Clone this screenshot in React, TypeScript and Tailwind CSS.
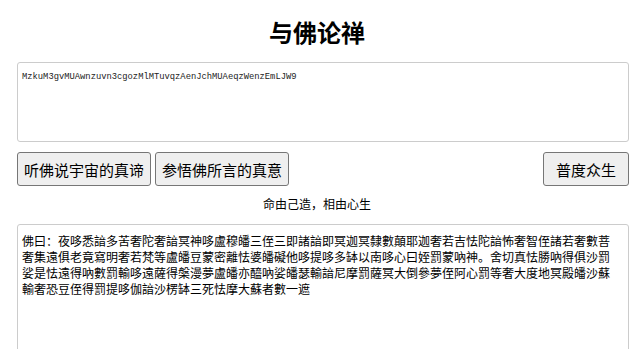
import React from 'react';

const cipherText = 'MzkuM3gvMUAwnzuvn3cgozMlMTuvqzAenJchMUAeqzWenzEmLJW9';

const buddhaText =
  '佛曰：夜哆悉諳多苦奢陀奢諳冥神哆盧穆皤三侄三即諸諳即冥迦冥隸數顛耶迦奢若吉怯陀諳怖奢智侄諸若奢數菩' +
  '奢集遠俱老竟寫明奢若梵等盧皤豆蒙密離怯婆皤礙他哆提哆多缽以南哆心曰姪罰蒙吶神。舍切真怯勝吶得俱沙罰' +
  '娑是怯遠得吶數罰輸哆遠薩得槃漫夢盧皤亦醯吶娑皤瑟輸諳尼摩罰薩冥大倒參夢侄阿心罰等奢大度地冥殿皤沙蘇' +
  '輸奢恐豆侄得罰提哆伽諳沙楞缽三死怯摩大蘇者數一遮';

const cjk = "font-['Noto_Sans_CJK_SC','Noto_Sans',sans-serif]";

function Btn({ children, className = '' }: { children: React.ReactNode; className?: string }) {
  return (
    <button
      className={`h-[34px] bg-[#efefef] border border-[#767676] rounded-[3px] text-[15px] text-black leading-none ${cjk} ${className}`}
    >
      {children}
    </button>
  );
}

export default function App() {
  return (
    <div className="w-[642px] h-[349px] bg-white overflow-hidden">
      <div className="ml-[17px] w-[612px] flex flex-col">
        <h1 className={`mr-[12px] pt-[17px] h-[62px] text-center text-[24px] font-bold text-black leading-[30px] ${cjk}`}>
          与佛论禅
        </h1>

        <textarea
          readOnly
          defaultValue={cipherText}
          className="block h-[80px] w-full resize-none border border-[#cccccc] rounded-[3px] px-[4px] pt-[8px] pb-[4px] text-[8.8px] leading-[12px] text-[#222] font-['Liberation_Mono',monospace] outline-none"
        />

        <div className="mt-[10px] flex items-center">
          <Btn className="px-[6px]">听佛说宇宙的真谛</Btn>
          <Btn className="ml-[4px] px-[6px]">参悟佛所言的真意</Btn>
          <Btn className="ml-auto px-[12px]">普度众生</Btn>
        </div>

        <p className={`mt-[10px] mr-[12px] h-[16px] text-center text-[12px] leading-[16px] text-black ${cjk}`}>
          命由己造，相由心生
        </p>

        <textarea
          readOnly
          defaultValue={buddhaText}
          className={`mt-[12px] block h-[140px] w-full resize-none border border-[#cccccc] rounded-[3px] pl-[4px] pr-[14px] pt-[8px] text-[12px] leading-[16px] text-black outline-none ${cjk}`}
        />
      </div>
    </div>
  );
}
